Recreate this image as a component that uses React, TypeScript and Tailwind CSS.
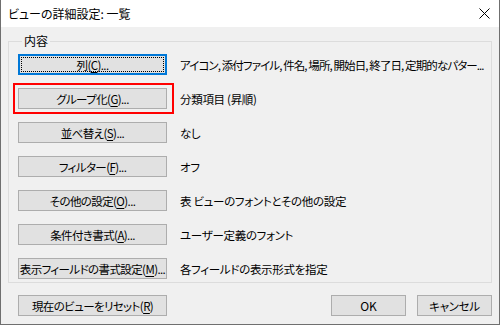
import React from 'react';

type Row = { label: string; key: string; desc: string; focused?: boolean; marked?: boolean; tight?: boolean };

const rows: Row[] = [
  { label: '列(', key: 'C', desc: 'アイコン, 添付ファイル, 件名, 場所, 開始日, 終了日, 定期的なパター...', focused: true, tight: true },
  { label: 'グループ化(', key: 'G', desc: '分類項目 (昇順)', marked: true },
  { label: '並べ替え(', key: 'S', desc: 'なし' },
  { label: 'フィルター(', key: 'F', desc: 'オフ' },
  { label: 'その他の設定(', key: 'O', desc: '表 ビューのフォントとその他の設定' },
  { label: '条件付き書式(', key: 'A', desc: 'ユーザー定義のフォント' },
  { label: '表示フィールドの書式設定(', key: 'M', desc: '各フィールドの表示形式を指定' },
];

function Caption({ label, k, tail = ')...' }: { label: string; k: string; tail?: string }) {
  return (
    <span className="whitespace-nowrap text-[11.5px] tracking-[-0.6px]">
      {label}
      <span className="underline underline-offset-2">{k}</span>
      {tail}
    </span>
  );
}

function DlgButton({ children, focused, className = '' }: { children: React.ReactNode; focused?: boolean; className?: string }) {
  if (focused) {
    return (
      <div className={`h-[21px] bg-[#e1e1e1] border-2 border-[#0078d7] p-[1px] flex shrink-0 ${className}`}>
        <div className="flex-1 border border-dotted border-black flex items-center justify-center">{children}</div>
      </div>
    );
  }
  return (
    <div className={`h-[21px] bg-[#e1e1e1] border border-[#adadad] flex items-center justify-center shrink-0 ${className}`}>
      {children}
    </div>
  );
}

export default function App() {
  return (
    <div
      className="w-[500px] h-[328px] overflow-hidden bg-white text-[12px] leading-[16px] text-black [font-feature-settings:'palt']"
      style={{ fontFamily: '"Noto Sans CJK JP", "Noto Sans", sans-serif' }}
    >
      <div className="h-[325px] border-x border-b border-[#6f6f6f] bg-[#f0f0f0] flex flex-col">
        {/* title bar */}
        <div className="h-[27px] bg-white flex items-center justify-between pl-[7px] pr-[8px] shrink-0">
          <span>ビューの詳細設定: 一覧</span>
          <svg width="11" height="11" viewBox="0 0 11 11" className="mr-[1px]">
            <path d="M0.5 0.5 L10.5 10.5 M10.5 0.5 L0.5 10.5" stroke="#000" strokeWidth="1" />
          </svg>
        </div>

        <div className="px-[7px] pt-[6px]">
          <fieldset className="min-w-0 border border-[#dcdcdc] pl-[9px] pr-[8px] pb-[3px]">
            <legend className="ml-[4px] px-[2px] leading-[16px]">内容</legend>
            <div className="flex flex-col gap-[13px] pt-[5px]">
              {rows.map((r) => (
                <div key={r.key} className="flex items-center min-w-0">
                  <div className="relative shrink-0">
                    <DlgButton focused={r.focused} className="w-[149px]">
                      <Caption label={r.label} k={r.key} />
                    </DlgButton>
                    {r.marked && (
                      <div className="absolute left-[-5px] top-[-5px] w-[161px] h-[31px] border-2 border-[#ff0000]" />
                    )}
                  </div>
                  <span
                    className={`ml-[13px] whitespace-nowrap text-[11.5px] ${r.tight ? 'tracking-[-0.9px]' : 'tracking-[-0.3px]'}`}
                  >
                    {r.desc}
                  </span>
                </div>
              ))}
            </div>
          </fieldset>

          <div className="flex items-center mt-[12px] pl-[10px]">
            <DlgButton className="w-[149px]">
              <Caption label="現在のビューをリセット(" k="R" tail=")" />
            </DlgButton>
            <div className="flex-1" />
            <DlgButton className="w-[75px]">OK</DlgButton>
            <DlgButton className="w-[75px] ml-[11px]">
              <span className="text-[11.5px] tracking-[-0.3px]">キャンセル</span>
            </DlgButton>
          </div>
        </div>
      </div>
    </div>
  );
}
